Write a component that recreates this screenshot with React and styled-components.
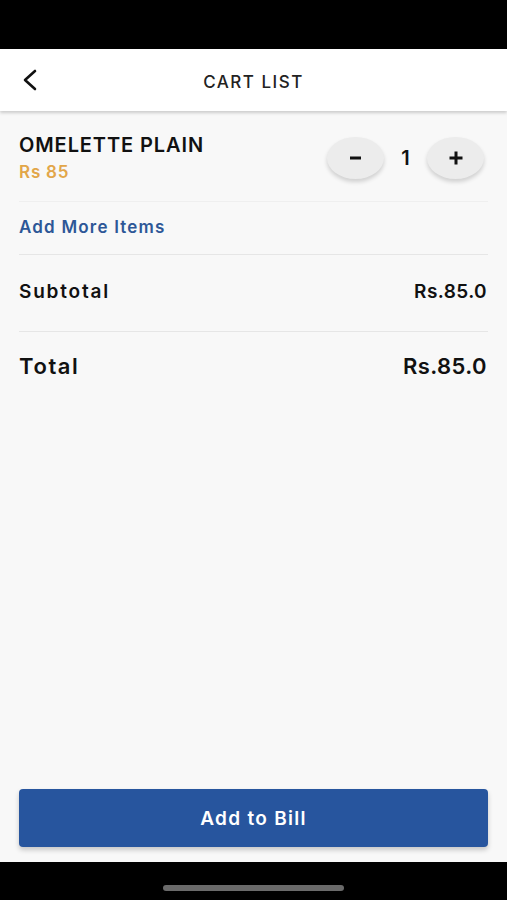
import React from "react";
import styled, { createGlobalStyle } from "styled-components";

const GlobalStyle = createGlobalStyle`
  html, body { margin: 0; padding: 0; background: #000; }
  * { box-sizing: border-box; }
`;

const FONT = `"Inter", "Noto Sans", sans-serif`;

const Screen = styled.div`
  width: 507px;
  height: 900px;
  display: flex;
  flex-direction: column;
  background: #000;
  font-family: ${FONT};
  overflow: hidden;
`;

const StatusBar = styled.div`
  height: 49px;
  flex: none;
  background: #000;
`;

const Header = styled.header`
  height: 62px;
  flex: none;
  background: #fff;
  display: grid;
  grid-template-columns: 60px 1fr 60px;
  align-items: center;
  box-shadow: 0 2px 3px rgba(0, 0, 0, 0.18);
  position: relative;
  z-index: 1;
`;

const BackButton = styled.button`
  border: none;
  background: none;
  padding: 0 0 0 21px;
  height: 100%;
  display: flex;
  align-items: center;
  color: #111;
`;

const Title = styled.h1`
  margin: 0;
  padding-top: 3px;
  text-align: center;
  font-size: 17px;
  font-weight: 500;
  letter-spacing: 1.5px;
  color: #222;
`;

const Content = styled.main`
  flex: 1;
  background: #f8f8f8;
  display: flex;
  flex-direction: column;
  padding: 0 19px;
`;

const ItemRow = styled.div`
  height: 91px;
  display: flex;
  align-items: center;
  justify-content: space-between;
  border-bottom: 1px solid #efefef;
`;

const ItemInfo = styled.div`
  display: flex;
  flex-direction: column;
  padding-top: 2px;
`;

const ItemName = styled.div`
  font-size: 20px;
  line-height: 24px;
  font-weight: 600;
  color: #111;
  letter-spacing: 0.9px;
`;

const ItemPrice = styled.div`
  margin-top: 5px;
  font-size: 17px;
  line-height: 20px;
  font-weight: 600;
  color: #e2a649;
  letter-spacing: 0.8px;
`;

const Stepper = styled.div`
  display: flex;
  align-items: center;
  margin: 4px 4px 0 0;
`;

const StepButton = styled.button`
  width: 57px;
  height: 42px;
  border-radius: 50%;
  border: none;
  background: #ececec;
  box-shadow: 0 3px 4px rgba(0, 0, 0, 0.16);
  display: flex;
  align-items: center;
  justify-content: center;
  color: #111;
  padding: 0;
`;

const Qty = styled.span`
  width: 43px;
  text-align: center;
  font-size: 20px;
  font-weight: 600;
  color: #111;
`;

const AddMore = styled.div`
  height: 53px;
  display: flex;
  align-items: center;
  border-bottom: 1px solid #e6e6e6;
  font-size: 17px;
  font-weight: 600;
  letter-spacing: 1.2px;
  color: #2d5797;
  padding-bottom: 2px;
`;

const SummaryRow = styled.div`
  height: ${(p) => p.$h}px;
  display: flex;
  align-items: center;
  justify-content: space-between;
  border-bottom: ${(p) => (p.$divider ? "1px solid #e6e6e6" : "none")};
  font-size: ${(p) => (p.$big ? 22 : 19)}px;
  font-weight: 600;
  color: #111;
  padding: 0 1px 4px 0;
`;

const Label = styled.span`
  letter-spacing: ${(p) => (p.$big ? 1.6 : 1.8)}px;
`;

const Amount = styled.span`
  letter-spacing: 0.4px;
`;

const Spacer = styled.div`
  flex: 1;
`;

const PrimaryButton = styled.button`
  height: 58px;
  margin-bottom: 15px;
  border: none;
  border-radius: 4px;
  background: #27559e;
  color: #fff;
  font-family: ${FONT};
  font-size: 19px;
  font-weight: 600;
  letter-spacing: 1.3px;
  box-shadow: 0 3px 5px rgba(0, 0, 0, 0.2);
`;

const NavBar = styled.div`
  height: 38px;
  flex: none;
  background: #000;
  display: flex;
  justify-content: center;
  padding-top: 23px;
`;

const HomeIndicator = styled.div`
  width: 181px;
  height: 6px;
  border-radius: 3px;
  background: #6a6a6a;
`;

export default function App() {
  return (
    <>
      <GlobalStyle />
      <Screen>
        <StatusBar />
        <Header>
          <BackButton aria-label="Back">
            <svg width="18" height="22" viewBox="0 0 18 22" fill="none">
              <path d="M14 2 L4 11 L14 20" stroke="#111" strokeWidth="2.6" strokeLinecap="round" strokeLinejoin="round" />
            </svg>
          </BackButton>
          <Title>CART LIST</Title>
          <span />
        </Header>
        <Content>
          <ItemRow>
            <ItemInfo>
              <ItemName>OMELETTE PLAIN</ItemName>
              <ItemPrice>Rs 85</ItemPrice>
            </ItemInfo>
            <Stepper>
              <StepButton aria-label="Decrease">
                <svg width="14" height="4" viewBox="0 0 14 4">
                  <rect x="1" y="0.5" width="11" height="3" fill="#111" />
                </svg>
              </StepButton>
              <Qty>1</Qty>
              <StepButton aria-label="Increase">
                <svg width="16" height="16" viewBox="0 0 16 16">
                  <rect x="1.5" y="6.5" width="13" height="3" fill="#111" />
                  <rect x="6.5" y="1.5" width="3" height="13" fill="#111" />
                </svg>
              </StepButton>
            </Stepper>
          </ItemRow>
          <AddMore>Add More Items</AddMore>
          <SummaryRow $h={77} $divider>
            <Label>Subtotal</Label>
            <Amount>Rs.85.0</Amount>
          </SummaryRow>
          <SummaryRow $h={72} $big>
            <Label $big>Total</Label>
            <Amount>Rs.85.0</Amount>
          </SummaryRow>
          <Spacer />
          <PrimaryButton>Add to Bill</PrimaryButton>
        </Content>
        <NavBar>
          <HomeIndicator />
        </NavBar>
      </Screen>
    </>
  );
}
